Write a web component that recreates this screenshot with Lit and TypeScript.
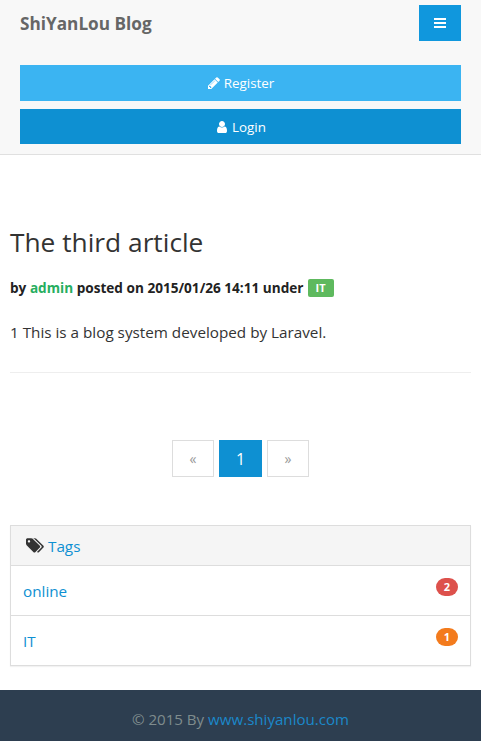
import { LitElement, html, css } from 'lit';
import { customElement } from 'lit/decorators.js';

const pencil = html`<svg class="icon" viewBox="0 0 1792 1792"><path fill="currentColor" d="M491 1536l91-91-235-235-91 91v107h128v128h107zm523-928q0-22-22-22-10 0-17 7l-542 542q-7 7-7 17 0 22 22 22 10 0 17-7l542-542q7-7 7-17zm-54-192l416 416-832 832h-416v-416zm683 96q0 53-37 90l-166 166-416-416 166-165q36-38 90-38 53 0 91 38l235 234q37 39 37 91z"/></svg>`;
const user = html`<svg class="icon" viewBox="0 0 1792 1792"><path fill="currentColor" d="M1536 1399q0 109-62.500 187t-150.500 78h-854q-88 0-150.500-78t-62.500-187q0-85 8.500-160.500t31.500-152 58.500-131 94-89 134.500-34.500q131 128 313 128t313-128q76 0 134.500 34.500t94 89 58.500 131 31.500 152 8.500 160.500zm-256-887q0 159-112.500 271.500t-271.500 112.500-271.500-112.500-112.500-271.500 112.500-271.500 271.500-112.500 271.500 112.500 112.500 271.500z"/></svg>`;
const tags = html`<svg class="tag-icon" viewBox="0 0 1920 1792"><path fill="currentColor" d="M448 448q0-53-37.500-90.500t-90.500-37.500-90.500 37.500-37.500 90.500 37.500 90.500 90.500 37.500 90.500-37.500 37.500-90.500zm1067 576q0 53-37 90l-491 492q-39 37-91 37-53 0-90-37l-715-716q-38-37-64.500-101t-26.500-117v-416q0-52 38-90t90-38h416q53 0 117 26.500t102 64.500l715 714q37 39 37 91zm384 0q0 53-37 90l-491 492q-39 37-91 37-36 0-59-14t-53-45l470-470q37-37 37-90 0-52-37-91l-715-714q-38-38-102-64.500t-117-26.500h224q53 0 117 26.500t102 64.500l715 714q37 39 37 91z"/></svg>`;

@customElement('app-root')
export class AppRoot extends LitElement {
  static styles = css`
    :host {
      display: block;
      font-family: "Open Sans", "Noto Sans", sans-serif;
      font-size: 15.25px;
      color: #333;
      background: #fff;
    }
    a { text-decoration: none; }
    .navbar {
      background: #f8f8f8;
      border-bottom: 1px solid #e0e0e0;
      padding: 5px 20px 10px;
    }
    .nav-top {
      display: flex;
      justify-content: space-between;
      height: 36px;
      margin-bottom: 24px;
    }
    .brand {
      font-size: 17.2px;
      font-weight: 700;
      color: #666;
      line-height: 37px;
    }
    .toggle {
      width: 42px;
      height: 36px;
      background: #1097dd;
      display: flex;
      flex-direction: column;
      align-items: center;
      justify-content: center;
      gap: 2px;
    }
    .toggle span {
      display: block;
      width: 12px;
      height: 2px;
      background: #fff;
    }
    .btn {
      display: flex;
      align-items: center;
      justify-content: center;
      gap: 3px;
      color: #fff;
      font-size: 13.4px;
    }
    .register { background: #3bb4f2; height: 36px; margin-bottom: 8px; }
    .login { background: #0e90d2; height: 35px; }
    .icon { width: 14px; height: 14px; }
    main { padding: 0 10px; }
    h1 {
      margin: 0;
      padding-top: 69px;
      font-size: 26.3px;
      font-weight: 400;
      line-height: 36px;
      color: #333;
    }
    .meta {
      margin-top: 19px;
      font-size: 13.6px;
      font-weight: 700;
      line-height: 18px;
      color: #222;
      display: flex;
      align-items: center;
      gap: 4px;
      white-space: pre;
    }
    .meta a { color: #27ae60; }
    .label {
      background: #5eb95e;
      color: #fff;
      font-size: 11px;
      line-height: 18px;
      padding: 0 8px;
      border-radius: 2px;
    }
    .body {
      margin: 25px 0 0;
      line-height: 20px;
      color: #333;
    }
    hr {
      border: 0;
      border-top: 1px solid #eee;
      margin: 30px 0 0;
    }
    .pager {
      display: flex;
      justify-content: center;
      gap: 5px;
      margin-top: 67px;
    }
    .pager div {
      height: 37px;
      box-sizing: border-box;
      display: flex;
      align-items: center;
      justify-content: center;
      border: 1px solid #ddd;
      color: #999;
      font-size: 14px;
      width: 42px;
    }
    .pager .on {
      width: 43px;
      background: #0e90d2;
      border-color: #0e90d2;
      color: #fff;
      font-size: 16px;
    }
    .panel {
      margin-top: 48px;
      border: 1px solid #ddd;
      box-shadow: 0 1px 1px rgba(0, 0, 0, 0.05);
    }
    .panel-head {
      background: #f5f5f5;
      height: 39px;
      display: flex;
      align-items: center;
      gap: 4px;
      padding-left: 15px;
      color: #333;
    }
    .panel-head a { color: #0e90d2; }
    .tag-icon { width: 18px; height: 17px; }
    .row {
      border-top: 1px solid #ddd;
      box-sizing: border-box;
      height: 50px;
      display: flex;
      justify-content: space-between;
      padding: 0 12px;
      line-height: 51px;
    }
    .row a { color: #0e90d2; }
    .badge {
      margin-top: 12px;
      height: 18px;
      min-width: 22px;
      border-radius: 9px;
      color: #fff;
      font-size: 11px;
      font-weight: 700;
      line-height: 18px;
      text-align: center;
    }
    .red { background: #dd514c; }
    .orange { background: #f37b1d; }
    footer {
      margin-top: 24px;
      background: #2d3e50;
      height: 51px;
      color: #7f8c8d;
      font-size: 15.1px;
      line-height: 58px;
      text-align: center;
    }
    footer a { color: #1b88ca; }
  `;

  render() {
    return html`
      <div class="navbar">
        <div class="nav-top">
          <div class="brand">ShiYanLou Blog</div>
          <div class="toggle"><span></span><span></span><span></span></div>
        </div>
        <a class="btn register">${pencil}<span>Register</span></a>
        <a class="btn login">${user}<span>Login</span></a>
      </div>
      <main>
        <h1>The third article</h1>
        <div class="meta"><span>by <a>admin</a> posted on 2015/01/26 14:11 under</span><span class="label">IT</span></div>
        <p class="body">1 This is a blog system developed by Laravel.</p>
        <hr />
        <div class="pager">
          <div>«</div>
          <div class="on">1</div>
          <div>»</div>
        </div>
        <div class="panel">
          <div class="panel-head">${tags}<a>Tags</a></div>
          <div class="row"><a>online</a><span class="badge red">2</span></div>
          <div class="row"><a>IT</a><span class="badge orange">1</span></div>
        </div>
      </main>
      <footer>© 2015 By <a>www.shiyanlou.com</a></footer>
    `;
  }
}
